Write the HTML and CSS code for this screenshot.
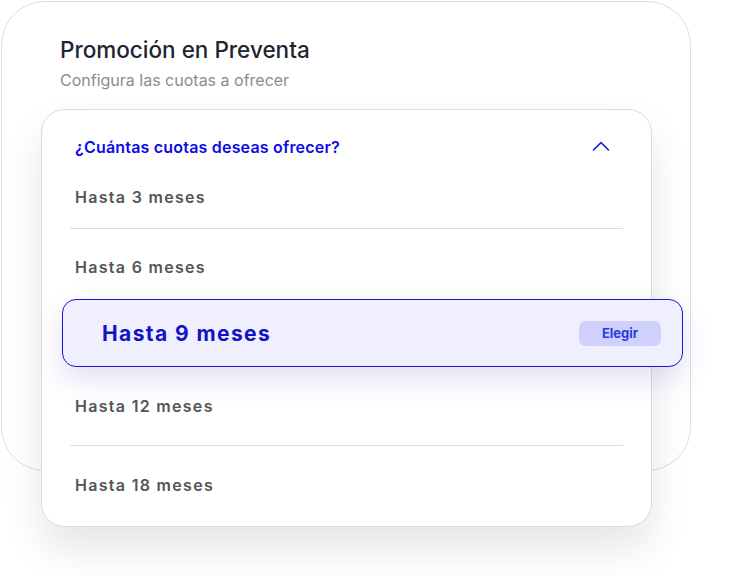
FILE: index.html
```html
<!DOCTYPE html>
<html lang="es">
<head>
<meta charset="utf-8">
<title>Promoción en Preventa</title>
<link rel="stylesheet" href="styles.css">
</head>
<body>
<div class="page">
<div class="panel">
  <h1 class="title">Promoción en Preventa</h1>
  <p class="subtitle">Configura las cuotas a ofrecer</p>
  <div class="dropdown">
    <div class="dd-header">
      <span class="dd-question">¿Cuántas cuotas deseas ofrecer?</span>
      <svg class="chevron" width="18" height="12" viewBox="0 0 18 12"><path d="M1.5 10 L9 2.5 L16.5 10" fill="none" stroke="#1414e6" stroke-width="1.6" stroke-linecap="round" stroke-linejoin="round"/></svg>
    </div>
    <div class="option opt1">Hasta 3 meses</div>
    <div class="divider d1"></div>
    <div class="option opt2">Hasta 6 meses</div>
    <div class="selected">
      <span class="sel-label">Hasta 9 meses</span>
      <span class="choose">Elegir</span>
    </div>
    <div class="option opt4">Hasta 12 meses</div>
    <div class="divider d2"></div>
    <div class="option opt5">Hasta 18 meses</div>
  </div>
</div>
</div>
</body>
</html>
```

FILE: styles.css
```css
* { box-sizing: border-box; }
html, body { margin: 0; padding: 0; background: #ffffff; }
body { font-family: Inter, "Noto Sans", sans-serif; }

.page {
  width: 737px;
  height: 576px;
  padding: 1px 0 0 1px;
  overflow: hidden;
}

.panel {
  width: 690px;
  height: 470px;
  border: 1px solid #dedede;
  border-radius: 44px;
  background: #fff;
  padding-top: 34px;
}

.title {
  margin: 0 0 0 58px;
  font-size: 22.5px;
  line-height: 28px;
  font-weight: 500;
  color: #1f2530;
}

.subtitle {
  margin: 6px 0 0 58px;
  font-size: 16px;
  line-height: 20px;
  color: #8c8c8c;
}

.dropdown {
  margin: 19px 0 0 39px;
  width: 611px;
  border: 1px solid #dcdcdc;
  border-radius: 24px;
  background: #fff;
  box-shadow: 0 22px 40px rgba(0, 0, 0, 0.10);
  padding-bottom: 29px;
  position: relative;
}

.dd-header {
  margin: 25px 0 0 33px;
  height: 24px;
  display: flex;
  align-items: center;
  justify-content: space-between;
  padding-right: 41px;
}

.dd-question {
  font-size: 16px;
  font-weight: 600;
  letter-spacing: 0.2px;
  color: #0c0ce6;
  line-height: 24px;
}

.chevron { display: block; margin-top: -2px; }

.option {
  margin-left: 33px;
  height: 24px;
  line-height: 24px;
  font-size: 16px;
  font-weight: 600;
  letter-spacing: 1.3px;
  color: #555555;
}

.opt1 { margin-top: 26px; }
.opt2 { margin-top: 26px; }
.opt4 { margin-top: 27px; }
.opt5 { margin-top: 27px; }

.divider {
  height: 1px;
  background: #dcdcdc;
  margin: 0 28px;
}
.d1 { margin-top: 19px; }
.d2 { margin-top: 27px; }

.selected {
  margin: 20px -32px 0 20px;
  height: 68px;
  border: 1.5px solid #1818d8;
  border-radius: 14px;
  background: #efeffd;
  box-shadow: 0 12px 28px rgba(70, 60, 180, 0.16);
  display: flex;
  align-items: center;
  justify-content: space-between;
  padding: 0 21px 0 39px;
  position: relative;
}

.sel-label {
  font-size: 21px;
  font-weight: 700;
  letter-spacing: 1.4px;
  color: #1212c8;
}

.choose {
  width: 82px;
  height: 25px;
  border-radius: 7px;
  background: #cfd0fc;
  color: #2a3ae4;
  font-size: 13px;
  font-weight: 700;
  display: flex;
  align-items: center;
  justify-content: center;
}
```
